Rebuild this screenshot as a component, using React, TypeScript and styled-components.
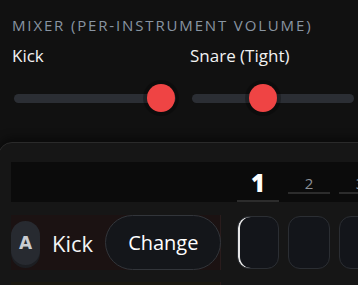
import React from "react";
import styled, { createGlobalStyle } from "styled-components";

const GlobalStyle = createGlobalStyle`
  html, body {
    margin: 0;
    background: #111111;
    font-family: "Open Sans", "Noto Sans", sans-serif;
    overflow: hidden;
  }
`;

const Page = styled.div`
  width: 358px;
  height: 285px;
  overflow: hidden;
  background: #111111;
`;

const MixerSection = styled.section`
  padding: 15px 2px 30px 12px;
`;

const SectionTitle = styled.h3`
  margin: 0;
  font-size: 15px;
  line-height: 20px;
  font-weight: 400;
  letter-spacing: 1.85px;
  text-transform: uppercase;
  color: #8995a2;
  white-space: nowrap;
`;

const MixerGrid = styled.div`
  display: grid;
  grid-template-columns: 1fr 1fr;
  column-gap: 12px;
  margin-top: 10px;
`;

const Channel = styled.div`
  display: flex;
  flex-direction: column;
`;

const ChannelLabel = styled.span`
  font-size: 17px;
  line-height: 22px;
  color: #f2f2f2;
  white-space: nowrap;
`;

const Slider = styled.div`
  position: relative;
  height: 28px;
  margin: 17px 2px 0;
  display: flex;
  align-items: center;
`;

const Track = styled.div`
  width: 100%;
  height: 9px;
  border-radius: 5px;
  background: #2b2e34;
`;

const Thumb = styled.div`
  position: absolute;
  top: 0;
  width: 28px;
  height: 28px;
  border-radius: 50%;
  background: #ef4444;
  transform: translateX(-50%);
  box-shadow: 0 0 0 4px rgba(0, 0, 0, 0.28);
`;

const Panel = styled.section`
  width: 640px;
  margin-left: -2px;
  padding: 19px 0 0 12px;
  background: #161616;
  border: 1px solid #2a2a2a;
  border-radius: 14px;
  box-shadow: 0 -4px 10px rgba(0, 0, 0, 0.45);
`;

const StepHeader = styled.div`
  display: flex;
  height: 40px;
  background: #0b0b0b;
`;

const HeaderSpacer = styled.div`
  width: 210px;
  flex-shrink: 0;
`;

const StepNumbers = styled.div`
  display: flex;
  align-items: flex-start;
  gap: 9px;
  padding: 9px 0 0 16px;
`;

const StepNumber = styled.div<{ $current?: boolean }>`
  width: 42px;
  text-align: center;
  margin-top: ${(p) => (p.$current ? 0 : 3)}px;
  font-size: ${(p) => (p.$current ? 24 : 15)}px;
  line-height: ${(p) => (p.$current ? 24 : 18)}px;
  font-weight: ${(p) => (p.$current ? 800 : 400)};
  color: ${(p) => (p.$current ? "#ffffff" : "#8c9096")};
  padding-bottom: ${(p) => (p.$current ? 5 : 0)}px;
  border-bottom: 2px solid #2c2c2c;
`;

const TrackRow = styled.div<{ $tint: string }>`
  display: flex;
  align-items: center;
  height: 55px;
  margin-top: ${(p) => (p.$tint === "red" ? 13 : 12)}px;
`;

const RowHeader = styled.div<{ $tint: string }>`
  box-sizing: border-box;
  width: 210px;
  height: 100%;
  flex-shrink: 0;
  display: flex;
  align-items: center;
  gap: 12px;
  background: ${(p) => (p.$tint === "red" ? "#1b1212" : "#1a1810")};
  border-right: 1px solid #2a1c1c;
`;

const KeyBadge = styled.div`
  width: 29px;
  height: 44px;
  flex-shrink: 0;
  border-radius: 15px;
  background: #272a30;
  box-shadow: 0 3px 0 #1c1e22;
  display: flex;
  align-items: center;
  justify-content: center;
  font-family: "DejaVu Sans", sans-serif;
  font-weight: 700;
  font-size: 17px;
  color: #c9ccd1;
`;

const TrackName = styled.span`
  font-size: 22px;
  line-height: 28px;
  color: #f4f4f4;
  white-space: nowrap;
`;

const ChangeButton = styled.button`
  box-sizing: border-box;
  height: 55px;
  flex-shrink: 0;
  padding: 0 22px;
  border-radius: 28px;
  border: 1px solid #32353a;
  background: #14161a;
  color: #ffffff;
  font-family: "Open Sans", sans-serif;
  font-size: 20px;
  cursor: pointer;
`;

const Cells = styled.div`
  display: flex;
  gap: 9px;
  padding-left: 16px;
`;

const Cell = styled.div<{ $playing?: boolean }>`
  box-sizing: border-box;
  width: 42px;
  height: 53px;
  flex-shrink: 0;
  border-radius: 12px;
  background: #13151a;
  border: 1px solid #2b2e33;
  box-shadow: ${(p) => (p.$playing ? "inset 2px 0 0 #e6e6e6" : "none")};
`;

const channels = [
  { name: "Kick", volume: 90.7 },
  { name: "Snare (Tight)", volume: 43.8 },
];

const steps = [1, 2, 3, 4, 5, 6];

const App = () => {
  return (
    <Page>
      <GlobalStyle />
      <MixerSection>
        <SectionTitle>Mixer (per-instrument volume)</SectionTitle>
        <MixerGrid>
          {channels.map((c) => (
            <Channel key={c.name}>
              <ChannelLabel>{c.name}</ChannelLabel>
              <Slider>
                <Track />
                <Thumb style={{ left: `${c.volume}%` }} />
              </Slider>
            </Channel>
          ))}
        </MixerGrid>
      </MixerSection>
      <Panel>
        <StepHeader>
          <HeaderSpacer />
          <StepNumbers>
            {steps.map((s) => (
              <StepNumber key={s} $current={s === 1}>
                {s}
              </StepNumber>
            ))}
          </StepNumbers>
        </StepHeader>
        <TrackRow $tint="red">
          <RowHeader $tint="red">
            <KeyBadge>A</KeyBadge>
            <TrackName>Kick</TrackName>
            <ChangeButton>Change</ChangeButton>
          </RowHeader>
          <Cells>
            {steps.map((s) => (
              <Cell key={s} $playing={s === 1} />
            ))}
          </Cells>
        </TrackRow>
        <TrackRow $tint="yellow">
          <RowHeader $tint="yellow" />
        </TrackRow>
      </Panel>
    </Page>
  );
};

export default App;
